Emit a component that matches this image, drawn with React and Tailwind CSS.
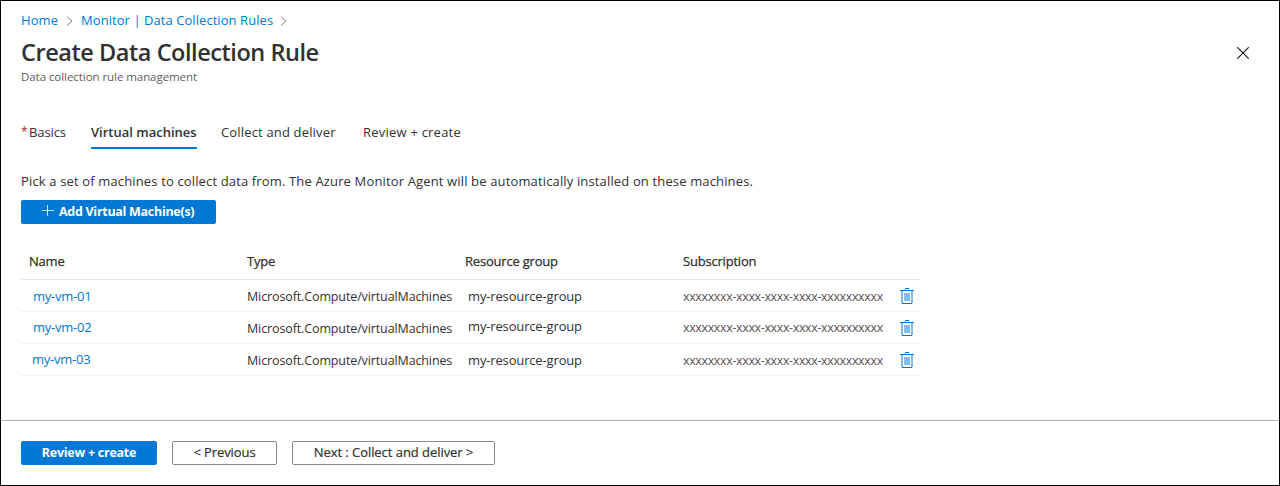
const rows = [
  { name: 'my-vm-01', nameClass: 'pl-1 pt-0.5', groupClass: 'pt-0.5', subClass: 'pt-[3px]' },
  { name: 'my-vm-02', nameClass: 'pl-1 pt-px', groupClass: 'pb-px', subClass: 'pt-0.5' },
  { name: 'my-vm-03', nameClass: 'pl-[3px] pt-px', groupClass: 'pt-0.5', subClass: 'pt-[3px]' },
];

function Chevron() {
  return (
    <svg className="h-[10px] w-[7px]" viewBox="0 0 7 10" fill="none" stroke="#767676" strokeWidth="0.9">
      <path d="M0.8 0.5 6 5 0.8 9.5" />
    </svg>
  );
}

function Trash() {
  return (
    <svg className="-ml-px h-4 w-[14px]" viewBox="0 0 14 16" shapeRendering="crispEdges">
      <path fill="#83bbeb" d="M1 3h2v12H1zM11 3h2v12h-2zM4 5h6v8H4zM4 1h1v1H4zM9 1h1v1H9z" />
      <path fill="#0078d4" d="M0 2h14v1H0zM5 0h4v1H5zM2 15h10v1H2z" />
    </svg>
  );
}

export default function App() {
  return (
    <div className="flex h-[486px] w-[1280px] flex-col border border-black bg-white font-['Open_Sans',sans-serif] text-[13px] whitespace-nowrap text-[#323130]">
      <header className="flex h-[96px] justify-between pl-5">
        <div>
          <nav className="flex h-[20px] items-center pt-[19px] text-[#0078d4]">
            <a className="w-[45px] tracking-[0.1px]">Home</a>
            <Chevron />
            <a className="ml-[7px] w-[200px] pl-px tracking-[0.06px]">Monitor | Data Collection Rules</a>
            <Chevron />
          </nav>
          <h1 className="mt-[15px] text-[23.5px] leading-[33px] font-semibold tracking-[-0.45px]">Create Data Collection Rule</h1>
          <p className="pt-px text-[11.5px] leading-[14px] tracking-[-0.06px] text-[#605e5c]">Data collection rule management</p>
        </div>
        <button className="mt-[46px] mr-[30px] h-3 w-3" aria-label="Close">
          <svg className="h-3 w-3" viewBox="0 0 12 12" stroke="#111" strokeWidth="1.1">
            <path d="M0.3 0.3 11.7 11.7M11.7 0.3 0.3 11.7" />
          </svg>
        </button>
      </header>

      <div className="mt-[21px] ml-5 flex h-[31px] leading-[28px]">
        <div className="flex w-[70px] tracking-[-0.1px]">
          <span className="w-2 text-[12px] leading-[27px] text-[#a4262c]">*</span>Basics
        </div>
        <div className="h-[31px] w-[106px] border-b-2 border-[#0078d4] font-semibold">Virtual machines</div>
        <div className="ml-6 w-[142px] tracking-[0.16px]">Collect and deliver</div>
        <div className="tracking-[0.22px]">Review + create</div>
      </div>

      <main className="h-[272px] border-b border-[#b3b0ad] pt-[22px] pl-5">
        <p className="h-[29px] leading-[20px] tracking-[0.145px]">Pick a set of machines to collect data from. The Azure Monitor Agent will be automatically installed on these machines.</p>
        <button className="flex h-6 w-[195px] items-center rounded-[2px] bg-[#0078d4] pl-[21px] text-[12.5px] font-bold tracking-[-0.29px] text-white">
          <svg className="mr-[5px] mb-[3px] h-[11px] w-3" viewBox="0 0 12 11" stroke="#ffffffcc" strokeWidth="1" shapeRendering="crispEdges">
            <path d="M0 5.5h12M5.5 0v11" />
          </svg>
          Add Virtual Machine(s)
        </button>
        <div className="mt-[19px] w-[900px]">
          <div className="grid h-[37px] grid-cols-[218px_218px_218px_218px] border-b border-[#e6e6e6] pl-2 leading-[36px] tracking-[-0.2px] [-webkit-text-stroke:0.25px]">
            <span>Name</span><span>Type</span><span>Resource group</span><span>Subscription</span>
          </div>
          {rows.map((row) => (
            <div key={row.name} className="grid h-8 grid-cols-[218px_221px_215px_218px_14px] items-center border-b border-[#f0f0f0] pl-2">
              <a className={'tracking-[-0.25px] text-[#0078d4] ' + row.nameClass}>{row.name}</a>
              <span className="pt-[3px] text-[12.5px] tracking-[-0.12px]">Microsoft.Compute/virtualMachines</span>
              <span className={'tracking-[-0.15px] ' + row.groupClass}>my-resource-group</span>
              <span className={'text-[12.5px] tracking-[-0.37px] text-[#5a5355] ' + row.subClass}>xxxxxxxx-xxxx-xxxx-xxxx-xxxxxxxxxx</span>
              <Trash />
            </div>
          ))}
        </div>
      </main>

      <footer className="flex gap-[15px] pt-5 pl-5">
        <button className="h-6 w-[136px] rounded-[2px] bg-[#0078d4] text-[12.5px] font-bold tracking-[-0.25px] text-white">Review + create</button>
        <button className="h-6 w-[105px] rounded-[2px] border border-[#8a8886] pb-0.5 leading-[20px] tracking-[-0.1px] [-webkit-text-stroke:0.2px]">&lt; Previous</button>
        <button className="h-6 w-[203px] rounded-[2px] border border-[#8a8886] pb-0.5 leading-[20px] tracking-[-0.05px] [-webkit-text-stroke:0.2px]">Next : Collect and deliver &gt;</button>
      </footer>
    </div>
  );
}
